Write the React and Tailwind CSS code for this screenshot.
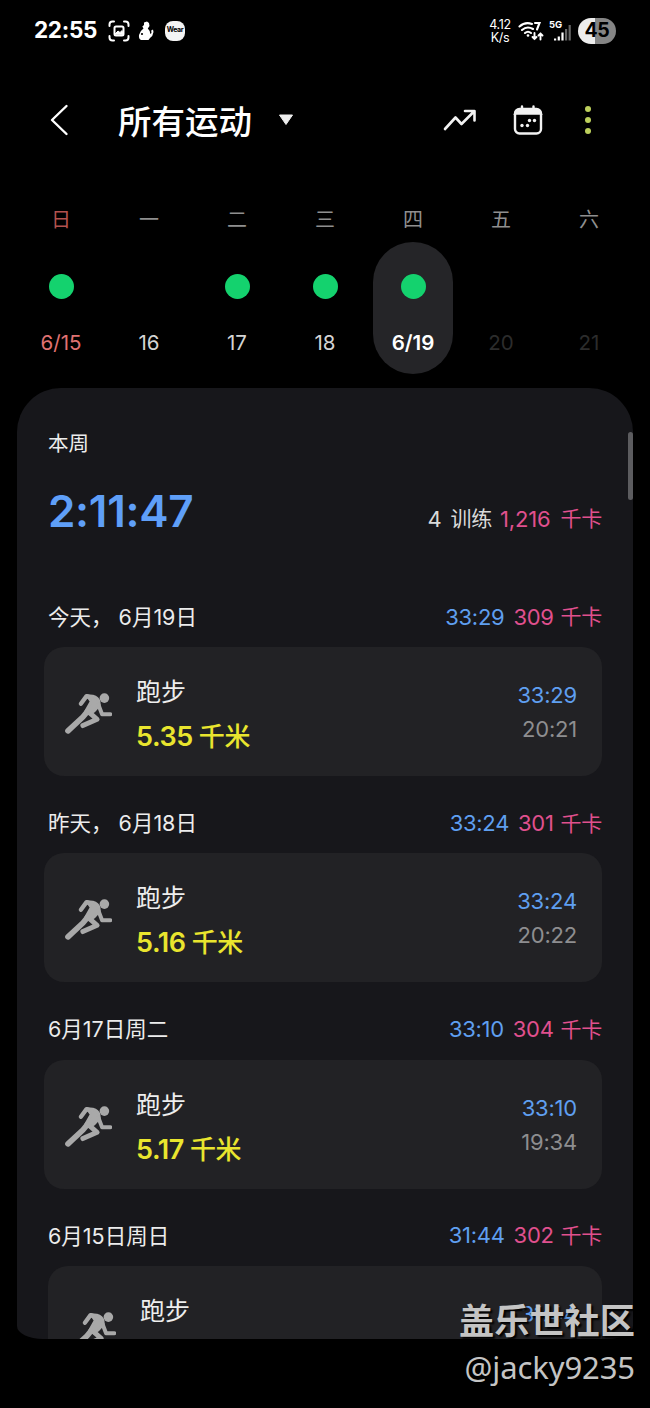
const week = [
  { day: '日', date: '6/15', done: true, dayClass: 'text-[#b4524f]', dateClass: 'text-[#e07272]' },
  { day: '一', date: '16', dayClass: 'text-[#8f8f8f]', dateClass: 'text-[#d4d4d4]' },
  { day: '二', date: '17', done: true, dayClass: 'text-[#8f8f8f]', dateClass: 'text-[#d4d4d4]' },
  { day: '三', date: '18', done: true, dayClass: 'text-[#8f8f8f]', dateClass: 'text-[#d4d4d4]' },
  { day: '四', date: '6/19', done: true, selected: true, dayClass: 'text-[#8f8f8f]', dateClass: 'text-white font-semibold' },
  { day: '五', date: '20', dayClass: 'text-[#8f8f8f]', dateClass: 'text-[#2c2c2c]' },
  { day: '六', date: '21', dayClass: 'text-[#8f8f8f]', dateClass: 'text-[#2c2c2c]' },
];

const workouts = [
  { label: '今天， 6月19日', time: '33:29', kcal: '309', distance: '5.35', start: '20:21' },
  { label: '昨天， 6月18日', time: '33:24', kcal: '301', distance: '5.16', start: '20:22' },
  { label: '6月17日周二', time: '33:10', kcal: '304', distance: '5.17', start: '19:34' },
  { label: '6月15日周日', time: '31:44', kcal: '302', last: true },
];

function Runner() {
  return (
    <svg viewBox="30 22 142 126" className="h-[42px] w-[47px] shrink-0" fill="none" stroke="#a9a9a9" strokeLinecap="round" strokeLinejoin="round">
      <circle cx="149" cy="40" r="14.500" fill="#a9a9a9" stroke="none" />
      <path d="M78 57 95 34 118 42" strokeWidth="13" />
      <path d="M97 32 114 34Q130 39 133 50L134 62 118 79 104 88 92 80 109 50Z" fill="#a9a9a9" strokeWidth="8" />
      <path d="M131 60 142 89 167 89" strokeWidth="12" />
      <path d="M100 78 84 97 39 139" strokeWidth="17" />
      <path d="M103 83 127 104 84 123" strokeWidth="15" />
    </svg>
  );
}

function StatusBar() {
  return (
    <div className="flex h-[61px] items-center pl-[34px] pr-[34px]">
      <span className="w-[64px] text-[22.5px] leading-none font-bold tracking-[-0.3px]">22:55</span>
      <svg viewBox="0 0 22 22" className="ml-[10px] size-[22px]" fill="none" stroke="#fff" strokeWidth="2" strokeLinecap="round">
        <path d="M1.5 6V4.500Q1.500 1.500 4.500 1.500H6M16 1.500H17.500Q20.500 1.500 20.500 4.500V6M20.500 16V17.500Q20.500 20.500 17.500 20.500H16M6 20.500H4.500Q1.500 20.500 1.500 17.500V16" />
        <rect x="6.500" y="6.500" width="9" height="9" rx="1.500" />
        <path d="M7 14 10 11 12 12.500 14 10.500 15 14Z" fill="#fff" strokeWidth="1" />
      </svg>
      <svg viewBox="0 0 16 20" className="ml-[8px] h-[20px] w-[16px]" fill="#fff">
        <path d="M6 1.500 9 .5 11 2 11.500 5 9.800 7.500Q12.500 10 12.300 13L13.500 12 13.200 9.500 15 8.500 15.500 11Q15 15 12 17L10.500 19H3Q.5 18 1 14Q1.800 10 5.500 7.500L4.300 5.500 6 4Z" />
        <circle cx="4" cy="13" r="1.100" fill="#000" />
      </svg>
      <span className="ml-[11px] flex size-[20px] items-center justify-center rounded-[8px] bg-[#f4f4f4] text-[7px] font-bold tracking-[-0.4px] text-black">Wear</span>
      <div className="ml-auto w-[26px] text-center text-[12.500px] leading-[13px] tracking-[-0.3px]">
        <div>4.12</div>
        <div>K/s</div>
      </div>
      <svg viewBox="0 0 26 20" className="ml-[5px] h-[20px] w-[26px]" fill="none" stroke="#fff" strokeWidth="2.100" strokeLinecap="round">
        <path d="M1.500 5.500Q7 .5 14 3M4 9Q9 4.500 15 8M7 12Q10 9.500 13 12" />
        <circle cx="10" cy="14.500" r="1.300" fill="#fff" stroke="none" />
        <path d="M17 2H21.500L19 8.500" />
        <path d="M16.500 12V18M14.500 16 16.500 18 18.500 16M22.500 18.500V12.500M20.500 14.500 22.500 12.500 24.500 14.500" strokeWidth="1.900" />
      </svg>
      <div className="relative ml-[5px] h-[22px] w-[23px]">
        <span className="absolute -top-px left-0 text-[9.500px] leading-[11px] font-bold">5G</span>
        <svg viewBox="0 0 23 22" className="size-full">
          <path d="M5 18.500h2.200v2h-2.200zM8.700 16.500h2.200v4h-2.200zM12.400 12.500h2.200v8h-2.200z" fill="#fff" />
          <path d="M16 9h2.200v11.500h-2.200zM19.600 5h2.200v15.500h-2.200z" fill="#666" />
        </svg>
      </div>
      <span className="ml-[6px] flex h-[26px] w-[38px] items-center justify-center rounded-full bg-linear-to-r from-[#ededed] from-45% to-[#858585] to-45% text-[19.500px] leading-none font-bold tracking-[-0.3px] text-black">45</span>
    </div>
  );
}

function Header() {
  return (
    <header className="flex h-[117px] items-center pl-[50px] pr-[59px]">
      <svg viewBox="0 0 20 32" className="h-[32px] w-[20px]" fill="none" stroke="#fff" strokeWidth="2.400" strokeLinecap="round" strokeLinejoin="round">
        <path d="M16.500 2 2 16 16.500 30" />
      </svg>
      <h1 className="ml-[48px] mt-[6px] text-[33.500px] leading-none font-medium whitespace-nowrap">所有运动</h1>
      <svg viewBox="0 0 16 12" className="ml-[26px] h-[12px] w-[16px]">
        <path d="M1.500 1H14.500L8 10.500Z" fill="#eee" stroke="#eee" strokeLinejoin="round" />
      </svg>
      <svg viewBox="0 0 34 22" className="ml-auto h-[22px] w-[34px]" fill="none" stroke="#f2f2f2" strokeWidth="2.600" strokeLinecap="round" strokeLinejoin="round">
        <path d="M2 20 12.500 8.500 18.500 15 31 2.500M22 2H31.500V11.500" />
      </svg>
      <svg viewBox="0 0 30 30" className="ml-[36px] size-[30px]" fill="none" stroke="#f2f2f2" strokeWidth="2.400" strokeLinecap="round">
        <rect x="2" y="4" width="26" height="24.500" rx="4.500" />
        <path d="M4.500 5.500H25.500L27.500 8.500H2.500ZM9 1.500V5M20.500 1.500V5" fill="#f2f2f2" />
        <g fill="#f2f2f2" stroke="none">
          <circle cx="9" cy="20.500" r="1.700" />
          <circle cx="14.500" cy="20.500" r="1.700" />
          <circle cx="16.500" cy="15.500" r="1.700" />
          <circle cx="21.500" cy="15.500" r="1.700" />
        </g>
      </svg>
      <div className="ml-[42px] flex w-[6px] flex-col gap-[5px]">
        <span className="size-[6px] rounded-full bg-[#bdd05c]" />
        <span className="size-[6px] rounded-full bg-[#bdd05c]" />
        <span className="size-[6px] rounded-full bg-[#bdd05c]" />
      </div>
    </header>
  );
}

function WeekStrip() {
  return (
    <div className="grid h-[210px] grid-cols-7 px-[17px] pt-[28px]">
      {week.map((d) => (
        <div key={d.day} className="flex flex-col items-center">
          <span className={`h-[28px] text-[20px] leading-[28px] ${d.dayClass}`}>{d.day}</span>
          <div className={`mt-[8px] flex h-[132px] w-[80px] flex-col items-center rounded-full pt-[32px] ${d.selected ? 'bg-[#252528]' : ''}`}>
            <span className={`size-[25px] rounded-full ${d.done ? 'bg-[#14d26e]' : ''}`} />
            <span className={`mt-[32px] text-[20.500px] leading-[24px] ${d.dateClass}`}>{d.date}</span>
          </div>
        </div>
      ))}
    </div>
  );
}

function Workout({ label, time, kcal, distance, start, last }) {
  return (
    <section className="h-[206.300px] shrink-0">
      <div className="flex h-[60px] items-center justify-between pl-[31px] pr-[31px] text-[22px]">
        <span className="text-[21.500px] whitespace-pre text-[#ececec]">{label}</span>
        <span className="flex items-center tracking-[-0.3px]">
          <span className="text-[#5f9ff0]">{time}</span>
          <span className="ml-[9px] text-[#e0508e]">{kcal}</span>
          <span className="ml-[7px] text-[21px] text-[#e0508e]">千卡</span>
        </span>
      </div>
      <div className={`mr-[31px] flex h-[129px] rounded-[20px] bg-[#222225] pl-[21px] pr-[25px] ${last ? 'ml-[31px]' : 'ml-[27px]'}`}>
        <div className="mt-[45px]">
          <Runner />
        </div>
        <div className="ml-[24px] pt-[29px]">
          <div className="text-[25px] leading-[32px] text-[#eeeeee]">跑步</div>
          {distance && (
            <div className="mt-[12px] flex text-[27px] leading-[34px] font-semibold tracking-[-0.4px] text-[#e9e52e]">
              <span>{distance}</span>
              <span className="ml-[6px] text-[26px] font-medium">千米</span>
            </div>
          )}
        </div>
        <div className="ml-auto pt-[31px] text-right text-[22px] leading-[34px] tracking-[-0.2px]">
          <div className="text-[#5f9ff0]">{time}</div>
          {start && <div className="text-[#8e8e90]">{start}</div>}
        </div>
      </div>
    </section>
  );
}

export default function App() {
  return (
    <div className="relative h-[1408px] w-[650px] overflow-hidden bg-black font-[Inter,'Noto_Sans_CJK_SC',sans-serif] text-white">
      <StatusBar />
      <Header />
      <WeekStrip />
      <main className="mx-[17px] flex h-[951px] flex-col overflow-hidden rounded-[44px_44px_26px_26px/44px_44px_13px_13px] bg-[#17171b]">
        <div className="h-[199px] shrink-0 px-[31px] pt-[40px]">
          <h2 className="text-[20.500px] leading-[32px] text-[#ececec]">本周</h2>
          <div className="mt-[23px] flex items-start justify-between">
            <span className="text-[44px] leading-[56px] font-semibold tracking-[-0.300px] text-[#5f9ff8]">2:11:47</span>
            <span className="flex items-center pt-[20px] text-[22px] leading-[32px] tracking-[-0.2px] text-[#dadada]">
              <span>4</span>
              <span className="ml-[9px] text-[21px]">训练</span>
              <span className="ml-[8px] text-[#e0508e]">1,216</span>
              <span className="ml-[10px] text-[21px] text-[#e0508e]">千卡</span>
            </span>
          </div>
        </div>
        {workouts.map((w) => (
          <Workout key={w.label} {...w} />
        ))}
      </main>
      <div className="absolute top-[432px] left-[628px] h-[68px] w-[5px] rounded-full bg-[#5c5c5f]" />
      <div className="absolute right-[15px] bottom-[18px] text-right whitespace-nowrap text-[#c4c4c4] [text-shadow:2px_2px_2px_#000]">
        <div className="text-[35.200px] leading-[46px] font-bold">盖乐世社区</div>
        <div className="font-['Noto_Sans'] text-[31px] leading-[46px] tracking-[-0.1px]">@jacky9235</div>
      </div>
    </div>
  );
}
